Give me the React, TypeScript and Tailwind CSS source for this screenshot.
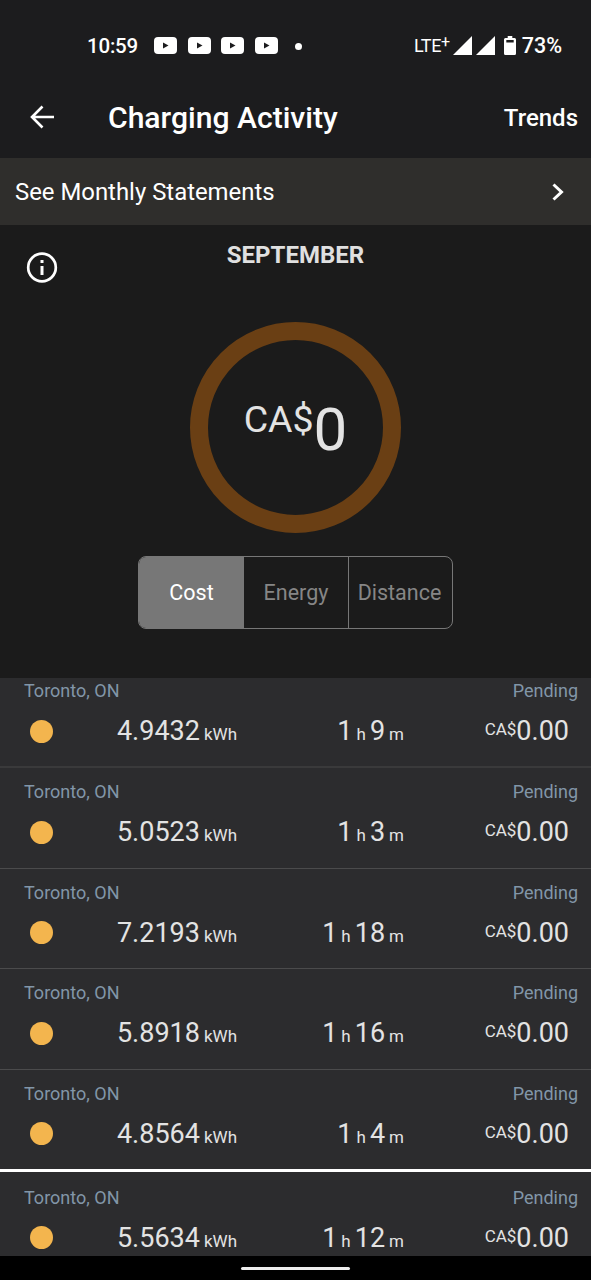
import { clsx } from 'clsx';

interface Session {
    location: string;
    status: string;
    energy: string;
    hours: number;
    minutes: number;
    cost: string;
}

const sessions: Session[] = [
    { location: 'Toronto, ON', status: 'Pending', energy: '4.9432', hours: 1, minutes: 9, cost: '0.00' },
    { location: 'Toronto, ON', status: 'Pending', energy: '5.0523', hours: 1, minutes: 3, cost: '0.00' },
    { location: 'Toronto, ON', status: 'Pending', energy: '7.2193', hours: 1, minutes: 18, cost: '0.00' },
    { location: 'Toronto, ON', status: 'Pending', energy: '5.8918', hours: 1, minutes: 16, cost: '0.00' },
    { location: 'Toronto, ON', status: 'Pending', energy: '4.8564', hours: 1, minutes: 4, cost: '0.00' },
    { location: 'Toronto, ON', status: 'Pending', energy: '5.5634', hours: 1, minutes: 12, cost: '0.00' },
];

const tabs = ['Cost', 'Energy', 'Distance'];

const VideoIcon = () => (
    <svg width="23" height="17" viewBox="0 0 23 17">
        <rect width="23" height="17" rx="4" fill="#fff" />
        <path d="M9 5.5v6l5.5-3z" fill="#1c1c1e" />
    </svg>
);

const SignalIcon = () => (
    <svg width="19" height="19" viewBox="0 0 19 19">
        <path d="M19 0v19H0z" fill="#fff" />
    </svg>
);

const StatusBar = () => (
    <div className="flex h-[78px] shrink-0 items-start justify-between pt-[34px] pr-[29px] pl-[87px] text-white">
        <div className="flex h-6 items-center">
            <span className="w-[67px] text-[20.5px] leading-6 font-medium tracking-[-0.2px]">10:59</span>
            <div className="-mt-0.5 flex gap-[10.5px]">
                <VideoIcon />
                <VideoIcon />
                <VideoIcon />
                <VideoIcon />
            </div>
            <span className="ml-[17px] size-[7px] rounded-full bg-white" />
        </div>
        <div className="flex h-6 items-center">
            <span className="flex text-[18px] leading-5 tracking-[-0.4px]">LTE<sup className="top-[-2px] text-[16px] leading-4">+</sup></span>
            <div className="-mt-0.5 ml-[3px] flex gap-[4px]">
                <SignalIcon />
                <SignalIcon />
            </div>
            <svg className="-mt-0.5 ml-[9px]" width="12" height="19" viewBox="0 0 13 19" preserveAspectRatio="none">
                <path d="M4 0h5v2h2.5A1.5 1.5 0 0 1 13 3.5V17.5A1.5 1.5 0 0 1 11.5 19h-10A1.5 1.5 0 0 1 0 17.5V3.5A1.5 1.5 0 0 1 1.5 2H4zM2.5 4v2.5h8V4z" fill="#fff" fillRule="evenodd" />
            </svg>
            <span className="ml-[6px] text-[21.5px] leading-6 font-medium">73%</span>
        </div>
    </div>
);

const Header = () => (
    <header className="flex h-20 shrink-0 items-center pr-[13px] pl-[29px] text-white">
        <svg className="-mt-0.5" width="26" height="24" viewBox="0 0 26 24" fill="none" stroke="#fff" strokeWidth="2.6">
            <path d="M25 12H3M13.5 1.5L3 12l10.5 10.5" />
        </svg>
        <h1 className="ml-[53px] text-[30.1px] leading-9 font-medium">Charging Activity</h1>
        <button className="ml-auto text-[24px] leading-8 font-medium">Trends</button>
    </header>
);

const Summary = () => (
    <section className="relative flex h-[453px] shrink-0 flex-col items-center bg-[#1b1b1b]">
        <svg className="absolute top-[27px] left-[26px]" width="32" height="32" viewBox="0 0 32 32" fill="none" stroke="#fff">
            <circle cx="16" cy="15.5" r="13.8" strokeWidth="2.7" />
            <path d="M16 14v9M16 8v3" strokeWidth="3" />
        </svg>
        <h2 className="mt-[15px] text-[24px] leading-[30px] font-bold text-[#e0e0e0]">SEPTEMBER</h2>
        <div className="mt-[52px] flex size-[211px] items-center justify-center rounded-full border-[18px] border-[#6a3f14]">
            <div className="flex items-start pt-1 text-[#e3e3e3]">
                <span className="pt-[2px] text-[37.5px] leading-[38px]">CA$</span>
                <span className="text-[60px] leading-[64px]">0</span>
            </div>
        </div>
        <div className="mt-[23px] grid h-[73px] w-[315px] grid-cols-[105px_104px_104px] overflow-hidden rounded-lg border border-[#777]">
            {tabs.map((tab, index) => (
                <button
                    key={tab}
                    className={clsx(
                        'pt-[2px] text-[21.5px]',
                        index === 0 ? 'bg-[#777] text-white' : 'text-[#868686]',
                        index === 2 && 'border-l border-[#777] pr-0.5'
                    )}
                >
                    {tab}
                </button>
            ))}
        </div>
    </section>
);

const SessionRow = ({ session, index }: { session: Session; index: number }) => (
    <li
        className={clsx(
            'flex shrink-0 flex-col',
            index === 0 && 'h-[90px] border-b-2 border-[#3a3a3b]',
            index > 0 && index < 4 && 'h-[100.67px] border-b border-[#4b4b4c] pt-[11px]',
            index === 4 && 'h-[102px] border-b-3 border-white pt-[11px]',
            index === 5 && 'h-[84px] pt-[13px]'
        )}
    >
        <div className="flex justify-between pr-[13px] pl-[24px] text-[18px] leading-[26px] text-[#8296a8]">
            <span>{session.location}</span>
            <span>{session.status}</span>
        </div>
        <div className="mt-[11px] flex h-8 items-center pr-[22px] pl-[30px] text-[27px] leading-8 text-[#e3e3e3]">
            <span className="size-[23px] rounded-full bg-[#f3b54e]" />
            <span className="w-[184px] text-right">
                {session.energy}<small className="ml-1 text-[17px] leading-4">kWh</small>
            </span>
            <span className="w-[167px] text-right">
                {session.hours}<small className="mr-[4px] ml-[4px] text-[17px] leading-4">h</small>
                {session.minutes}<small className="ml-[4px] text-[17px] leading-4">m</small>
            </span>
            <span className="ml-auto flex items-start">
                <small className="text-[17px] leading-[28px]">CA$</small>{session.cost}
            </span>
        </div>
    </li>
);

export default function App() {
    return (
        <div className="flex h-[1280px] w-[591px] flex-col overflow-hidden bg-[#1c1c1e] font-[Roboto,sans-serif]">
            <StatusBar />
            <Header />
            <a className="flex h-[67px] shrink-0 items-center justify-between bg-[#2f2e2c] pr-[27px] pl-[15px] text-[23.9px] text-white">
                <span className="pt-[3px]">See Monthly Statements</span>
                <svg width="12" height="18" viewBox="0 0 12 18" fill="none" stroke="#fff" strokeWidth="3">
                    <path d="M1.5 1.5L9.5 9l-8 7.5" />
                </svg>
            </a>
            <Summary />
            <ul className="flex h-[578px] shrink-0 flex-col bg-[#2c2c2e]">
                {sessions.map((session, index) => (
                    <SessionRow key={index} session={session} index={index} />
                ))}
            </ul>
            <div className="flex flex-1 items-center justify-center bg-black">
                <span className="h-[3px] w-[109px] rounded-full bg-[#eee]" />
            </div>
        </div>
    );
}
